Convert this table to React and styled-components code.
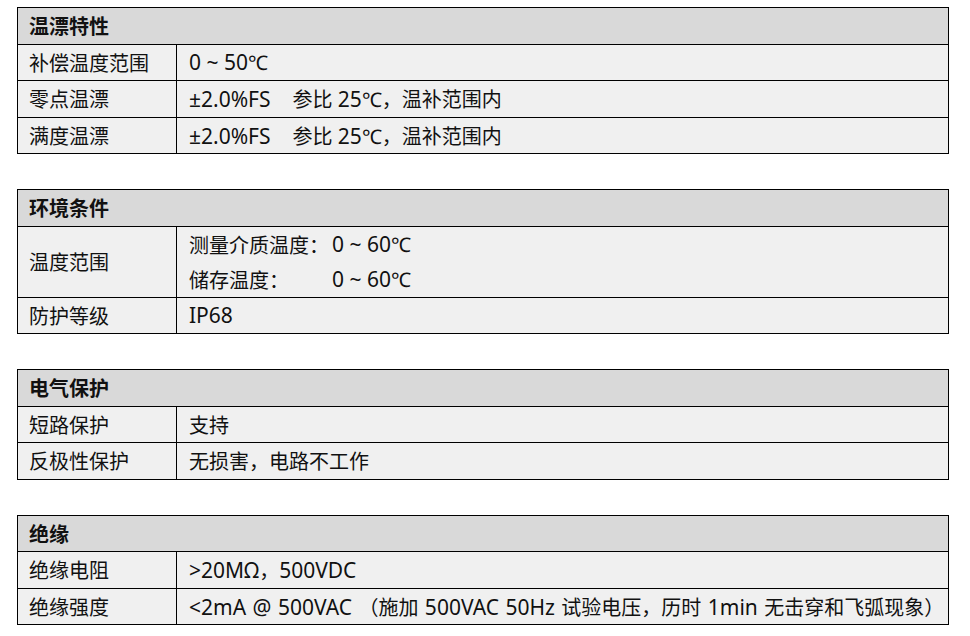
import React from "react";
import styled, { createGlobalStyle } from "styled-components";

const Global = createGlobalStyle`
  html, body { margin: 0; padding: 0; background: #ffffff; }
  body {
    font-family: "Noto Sans", "Noto Sans CJK SC", sans-serif;
    color: #111111;
  }
`;

const Page = styled.div`
  width: 970px;
  padding: 7px 0 0 17px;
  box-sizing: border-box;
  display: flex;
  flex-direction: column;
  gap: 35px;
`;

const Table = styled.section`
  width: 932px;
  box-sizing: border-box;
  border: 1px solid #000;
  display: flex;
  flex-direction: column;
`;

const Header = styled.div`
  height: 35.5px;
  background: #d9d9d9;
  display: flex;
  align-items: center;
  padding-left: 11px;
  font-size: 20px;
  font-weight: 700;
`;

const Row = styled.div`
  display: grid;
  grid-template-columns: 159px 1fr;
  border-top: 1px solid #000;
  background: #f0f0f0;
  min-height: ${(p) => (p.$tall ? "70px" : "35.5px")};
  font-size: 20px;
`;

const Label = styled.div`
  display: flex;
  align-items: center;
  padding-left: 11px;
  border-right: 1px solid #000;
  white-space: nowrap;
`;

const Value = styled.div`
  display: flex;
  align-items: center;
  padding-left: 12px;
  white-space: pre;
`;

const Line = styled.span`
  white-space: pre;
`;

const SubGrid = styled.div`
  display: grid;
  grid-template-columns: max-content max-content;
  grid-auto-rows: 35px;
  align-items: center;
  padding-left: 12px;
  column-gap: 3px;
`;

const Latin = styled.span`
  font-size: 21px;
  word-spacing: ${(p) => p.$ws || 0}px;
`;

const CJK_RE = /([\u3000-\u303F\u4E00-\u9FFF\uFF00-\uFFEF\u2103]+)/;

function Mixed({ text, ws }) {
  const parts = text.split(CJK_RE).filter((s) => s.length);
  return (
    <Line>
      {parts.map((p, i) =>
        CJK_RE.test(p) ? (
          <React.Fragment key={i}>{p}</React.Fragment>
        ) : (
          <Latin key={i} $ws={ws}>
            {p}
          </Latin>
        )
      )}
    </Line>
  );
}

const tables = [
  {
    title: "温漂特性",
    rows: [
      { label: "补偿温度范围", value: "0 ~ 50℃" },
      { label: "零点温漂", value: "±2.0%FS    参比 25℃，温补范围内" },
      { label: "满度温漂", value: "±2.0%FS    参比 25℃，温补范围内" },
    ],
  },
  {
    title: "环境条件",
    rows: [
      {
        label: "温度范围",
        sub: [
          ["测量介质温度：", "0 ~ 60℃"],
          ["储存温度：", "0 ~ 60℃"],
        ],
      },
      { label: "防护等级", value: "IP68" },
    ],
  },
  {
    title: "电气保护",
    rows: [
      { label: "短路保护", value: "支持" },
      { label: "反极性保护", value: "无损害，电路不工作" },
    ],
  },
  {
    title: "绝缘",
    rows: [
      { label: "绝缘电阻", value: ">20MΩ，500VDC" },
      {
        label: "绝缘强度",
        value: "<2mA @ 500VAC （施加 500VAC 50Hz 试验电压，历时 1min 无击穿和飞弧现象）",
        ws: 1,
      },
    ],
  },
];

export default function App() {
  return (
    <>
      <Global />
      <Page>
        {tables.map((t) => (
          <Table key={t.title}>
            <Header>{t.title}</Header>
            {t.rows.map((r) => (
              <Row key={r.label} $tall={!!r.sub}>
                <Label>{r.label}</Label>
                {r.sub ? (
                  <SubGrid>
                    {r.sub.map(([a, b]) => (
                      <React.Fragment key={a}>
                        <span>{a}</span>
                        <Mixed text={b} />
                      </React.Fragment>
                    ))}
                  </SubGrid>
                ) : (
                  <Value>
                    <Mixed text={r.value} ws={r.ws} />
                  </Value>
                )}
              </Row>
            ))}
          </Table>
        ))}
      </Page>
    </>
  );
}
